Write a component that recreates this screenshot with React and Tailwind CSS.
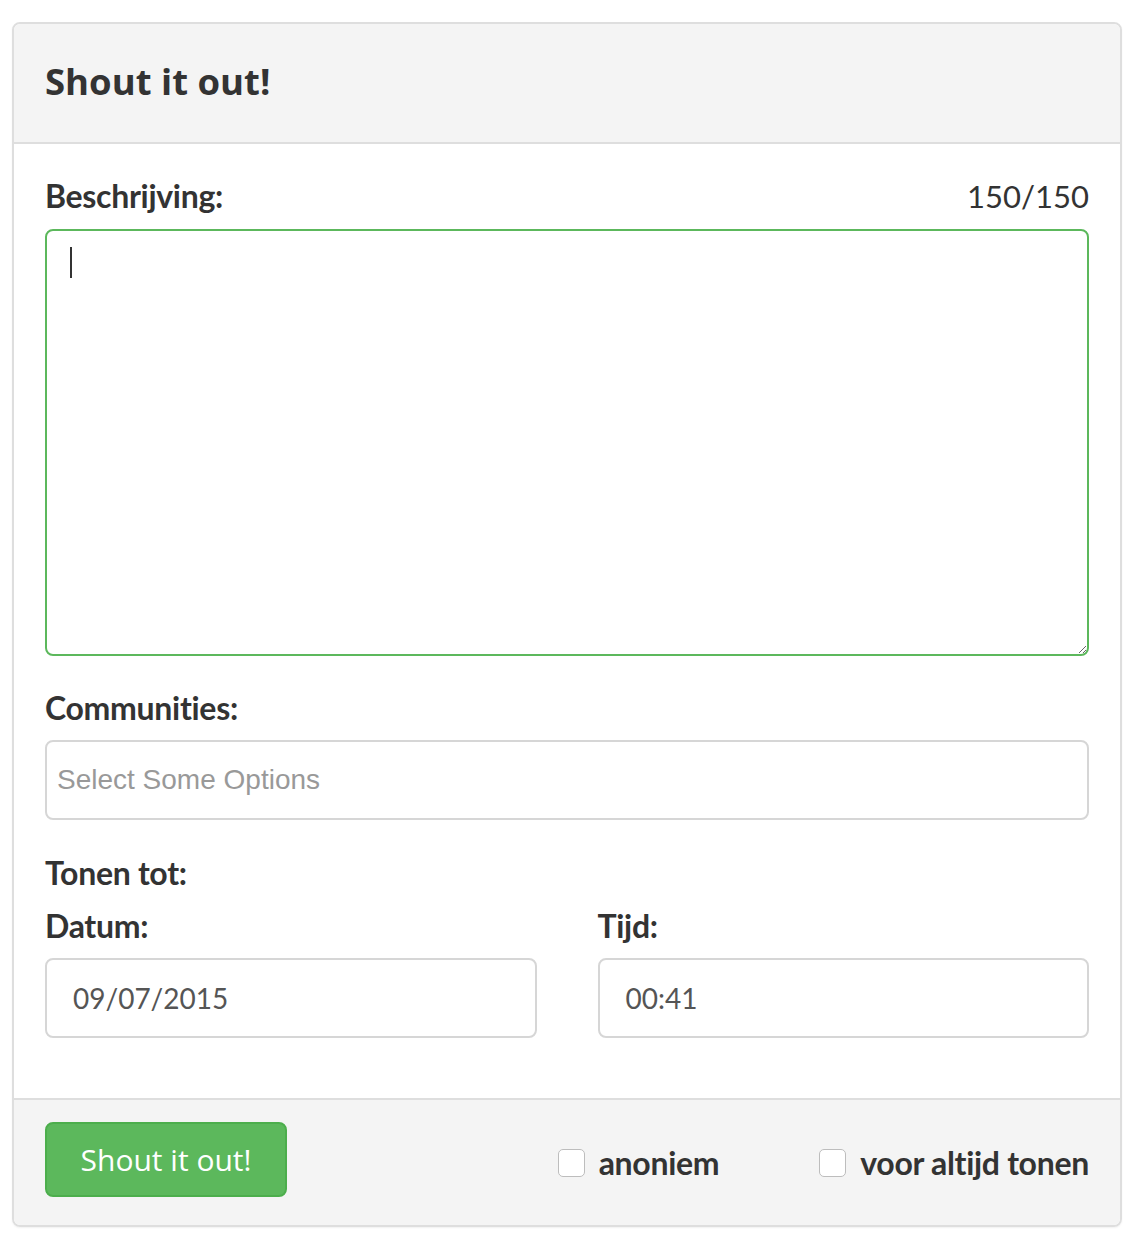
import React from 'react'

const lato = { fontFamily: 'Lato, "Open Sans", sans-serif' }
const open = { fontFamily: '"Open Sans", Lato, sans-serif' }
const arial = { fontFamily: '"Liberation Sans", Arial, sans-serif' }

function Label({ children, className = '' }){
  return (
    <div className={`h-10 text-[32px] font-bold leading-10 text-[#333] tracking-[-0.3px] ${className}`} style={lato}>
      {children}
    </div>
  )
}

function Box({ children }){
  return (
    <div className="h-[80px] rounded-lg border-2 border-[#d6d6d6] bg-white flex items-center px-[26px] text-[28px] text-[#555]" style={lato}>
      {children}
    </div>
  )
}

function Check({ label }){
  return (
    <label className="flex items-center gap-[14px]">
      <span className="w-[27px] h-[28px] rounded-[5px] border border-[#bdbdbd] bg-white"></span>
      <span className="text-[32px] font-bold text-[#333] leading-10 tracking-[-0.3px]" style={lato}>{label}</span>
    </label>
  )
}

export default function App(){
  return (
    <div className="min-h-screen bg-white pt-[22px] pl-[12px]">
      <div className="w-[1110px] rounded-lg border-2 border-[#dedede] overflow-hidden shadow-[0_1px_2px_rgba(0,0,0,0.06)]">
        <div className="h-[120px] bg-[#f4f4f4] border-b-2 border-[#dedede] flex items-center px-[31px] pb-[3px]">
          <h1 className="text-[36.5px] font-bold text-[#333] leading-none" style={open}>Shout it out!</h1>
        </div>

        <div className="bg-white px-[31px] pt-8 pb-[60px]">
          <div className="flex justify-between mb-[13px]">
            <Label>Beschrijving:</Label>
            <div className="h-10 text-[31px] leading-10 text-[#333]" style={lato}>150/150</div>
          </div>
          <div className="relative">
            <textarea className="block w-full h-[427px] rounded-lg border-2 border-[#5cb85c] bg-white outline-none"></textarea>
            <span className="absolute left-[25px] top-[18px] w-[2px] h-[31px] bg-[#333]"></span>
          </div>

          <Label className="mt-[32px] mb-[12px]">Communities:</Label>
          <div className="h-[80px] rounded-lg border-2 border-[#d6d6d6] bg-white flex items-center px-[10px] text-[28px] text-[#999]" style={arial}>
            Select Some Options
          </div>

          <Label className="mt-[33px]">Tonen tot:</Label>
          <div className="grid grid-cols-2 gap-[61px] mt-[13px]">
            <div>
              <Label className="mb-[12px]">Datum:</Label>
              <Box>09/07/2015</Box>
            </div>
            <div>
              <Label className="mb-[12px]">Tijd:</Label>
              <Box>00:41</Box>
            </div>
          </div>
        </div>

        <div className="bg-[#f4f4f4] border-t-2 border-[#dedede] px-[31px] pt-[22px] pb-[28px] flex items-center">
          <button className="w-[242px] h-[75px] rounded-lg bg-[#5cb85c] border-2 border-[#4cae4c] text-white text-[30px]" style={open}>
            Shout it out!
          </button>
          <div className="ml-auto flex items-center gap-[100px] pt-[6px]">
            <Check label="anoniem" />
            <Check label="voor altijd tonen" />
          </div>
        </div>
      </div>
    </div>
  )
}
